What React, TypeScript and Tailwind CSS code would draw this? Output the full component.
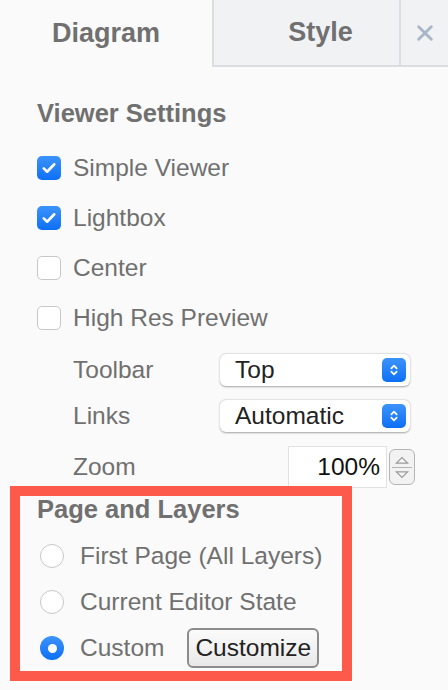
import React from "react";

function Check({ checked }: { checked: boolean }) {
  if (checked) {
    return (
      <span className="flex h-6 w-6 shrink-0 items-center justify-center rounded-[5px] bg-gradient-to-b from-[#3b93fb] to-[#0a6ff5]">
        <svg viewBox="0 0 24 24" className="h-[18px] w-[18px]" fill="none" stroke="white" strokeWidth="3.4" strokeLinecap="round" strokeLinejoin="round">
          <path d="M5 12.5l4.5 4.5L19 7" />
        </svg>
      </span>
    );
  }
  return <span className="h-6 w-6 shrink-0 rounded-[5px] border border-[#c8c8c8] bg-white" />;
}

function Radio({ checked }: { checked: boolean }) {
  if (checked) {
    return (
      <span className="flex h-6 w-6 shrink-0 items-center justify-center rounded-full bg-gradient-to-b from-[#3b93fb] to-[#0a6ff5]">
        <span className="h-[9px] w-[9px] rounded-full bg-white" />
      </span>
    );
  }
  return <span className="h-6 w-6 shrink-0 rounded-full border border-[#c8c8c8] bg-white" />;
}

function Select({ value }: { value: string }) {
  return (
    <div className="flex h-8 w-[190px] items-center justify-between rounded-[6px] bg-white pl-[15px] pr-1 shadow-[0_0.5px_2px_rgba(0,0,0,0.35)]">
      <span className="text-[24.5px] text-[#222]">{value}</span>
      <span className="flex h-6 w-6 items-center justify-center rounded-[5px] bg-gradient-to-b from-[#3b93fb] to-[#0a6ff5]">
        <svg viewBox="0 0 24 24" className="h-4 w-4" fill="none" stroke="white" strokeWidth="2.6" strokeLinecap="round" strokeLinejoin="round">
          <path d="M8 9.5l4-4 4 4M8 14.5l4 4 4-4" />
        </svg>
      </span>
    </div>
  );
}

const viewer = [
  { label: "Simple Viewer", checked: true },
  { label: "Lightbox", checked: true },
  { label: "Center", checked: false },
  { label: "High Res Preview", checked: false },
];

const pages = [
  { label: "First Page (All Layers)", checked: false },
  { label: "Current Editor State", checked: false },
];

export default function App() {
  return (
    <div className="relative h-[690px] w-[448px] overflow-hidden bg-[#fafafa] font-['Liberation_Sans',Arial,sans-serif] text-[#707070]">
      {/* tabs */}
      <div className="flex h-[67px]">
        <div className="flex w-[212px] items-center justify-center text-[27px] font-bold">Diagram</div>
        <div className="flex w-[187px] items-center justify-center border-b-2 border-l-2 border-[#dcdde0] bg-[#f1f2f4] pl-7 text-[27px] font-bold">
          Style
        </div>
        <div className="flex flex-1 items-center justify-center border-b-2 border-l-2 border-[#dcdde0] bg-[#f1f2f4]">
          <svg viewBox="0 0 20 20" className="h-[18px] w-[18px]" stroke="#a8b6c8" strokeWidth="3.2" strokeLinecap="round">
            <path d="M3 3l14 14M17 3L3 17" />
          </svg>
        </div>
      </div>

      <div className="pl-[37px]">
        <div className="mt-[32px] text-[25.5px] font-bold leading-[28px]">Viewer Settings</div>

        <div className="mt-[27px] flex flex-col gap-[22px]">
          {viewer.map((v) => (
            <div key={v.label} className="flex h-7 items-center gap-[12px]">
              <Check checked={v.checked} />
              <span className="text-[24.5px]">{v.label}</span>
            </div>
          ))}
        </div>

        <div className="mt-[22px] flex flex-col pl-[36px]">
          <div className="flex h-8 items-center">
            <span className="w-[147px] text-[24.5px]">Toolbar</span>
            <Select value="Top" />
          </div>
          <div className="mt-[14px] flex h-8 items-center">
            <span className="w-[147px] text-[24.5px]">Links</span>
            <Select value="Automatic" />
          </div>
          <div className="mt-[14px] flex items-center">
            <span className="w-[215px] text-[24.5px]">Zoom</span>
            <div className="flex h-[42px] w-[99px] items-center justify-end border border-[#e2e2e2] bg-white pr-[6px] text-[24.5px] text-[#111]">
              100%
            </div>
            <div className="ml-[2px] flex h-[36px] w-[26px] flex-col items-center justify-center rounded-[6px] border border-[#b5b5b5] bg-[#f2f2f2]">
              <svg viewBox="0 0 20 12" className="h-[10px] w-[16px]" fill="#f6f6f6" stroke="#9a9a9a" strokeWidth="1.5">
                <path d="M3 10L10 3l7 7z" />
              </svg>
              <div className="my-[2px] h-px w-[20px] bg-[#b5b5b5]" />
              <svg viewBox="0 0 20 12" className="h-[10px] w-[16px]" fill="#f6f6f6" stroke="#9a9a9a" strokeWidth="1.5">
                <path d="M3 2l7 7 7-7z" />
              </svg>
            </div>
          </div>
        </div>

        <div className="mt-[7px] text-[25.5px] font-bold leading-[28px]">Page and Layers</div>

        <div className="mt-[19px] flex flex-col gap-[18px] pl-[3px]">
          {pages.map((p) => (
            <div key={p.label} className="flex h-7 items-center gap-[16px]">
              <Radio checked={p.checked} />
              <span className="text-[24.5px]">{p.label}</span>
            </div>
          ))}
          <div className="flex h-7 items-center gap-[16px]">
            <Radio checked />
            <span className="text-[24.5px]">Custom</span>
            <button className="ml-[7px] h-10 rounded-[6px] border-2 border-[#8c8c8c] bg-gradient-to-b from-[#fbfbfb] to-[#e9e9e9] px-[6px] text-[24.5px] text-[#222]">
              Customize
            </button>
          </div>
        </div>
      </div>

      {/* highlight annotation */}
      <div className="pointer-events-none absolute left-[10px] top-[486px] h-[195px] w-[342px] border-[10px] border-[#fe5a4c]" />
    </div>
  );
}
